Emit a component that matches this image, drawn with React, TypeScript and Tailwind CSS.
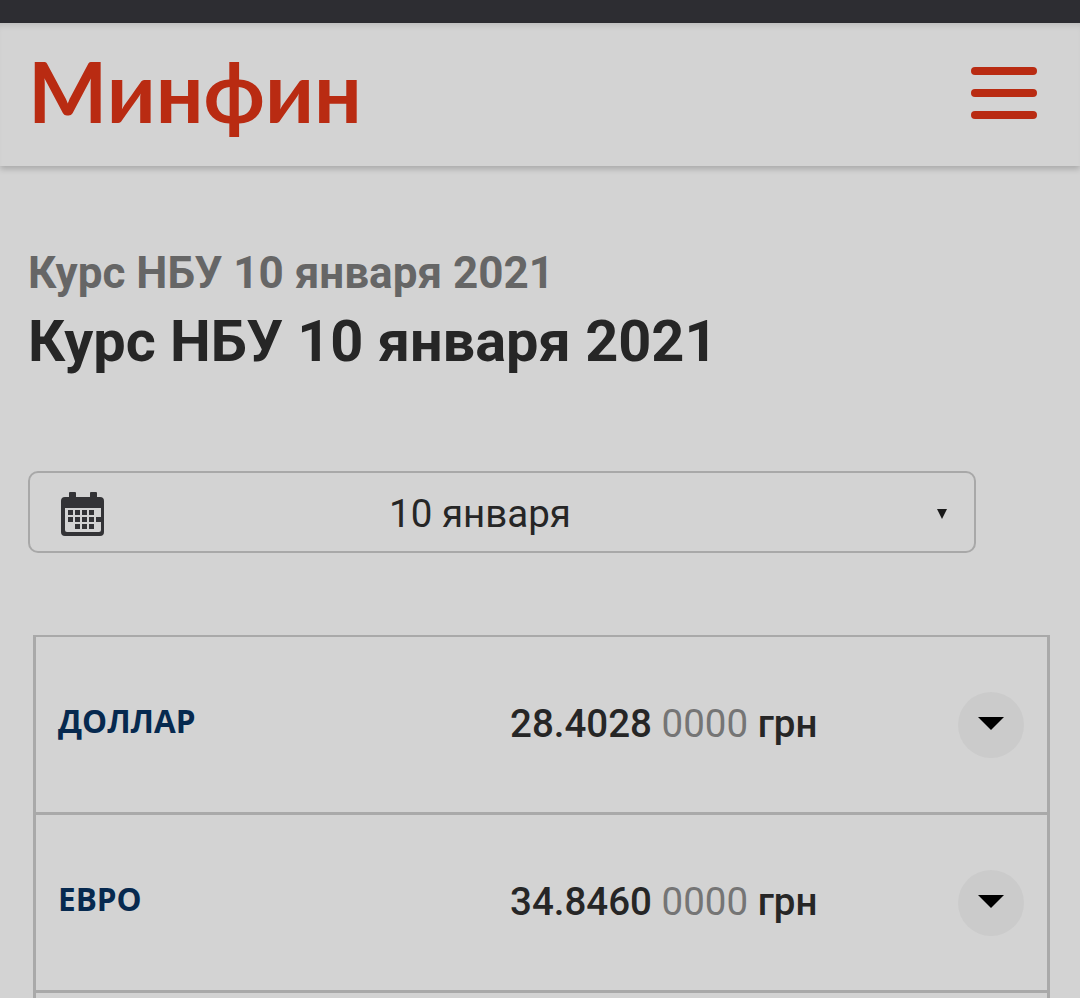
const rates = [
  { name: 'ДОЛЛАР', main: '28.4028', rest: '0000' },
  { name: 'ЕВРО', main: '34.8460', rest: '0000' },
]

function CalendarIcon() {
  return (
    <svg className="mt-[3px] h-[46px] w-[46px]" viewBox="0 0 46 46" aria-hidden="true">
      <path
        fill="#333336"
        fillRule="evenodd"
        d="M10 1h5a1 1 0 0 1 1 1v4h14V2a1 1 0 0 1 1-1h5a1 1 0 0 1 1 1v4h3a4 4 0 0 1 4 4v31a4 4 0 0 1-4 4H5a4 4 0 0 1-4-4V10a4 4 0 0 1 4-4h4V2a1 1 0 0 1 1-1zM5 17v22a2 2 0 0 0 2 2h32a2 2 0 0 0 2-2V17z"
      />
      <g fill="#333336">
        <rect x="8" y="19" width="5" height="5" />
        <rect x="15" y="19" width="5" height="5" />
        <rect x="22" y="19" width="5" height="5" />
        <rect x="29" y="19" width="5" height="5" />
        <rect x="8" y="26" width="5" height="5" />
        <rect x="15" y="26" width="5" height="5" />
        <rect x="22" y="26" width="5" height="5" />
        <rect x="29" y="26" width="5" height="5" />
        <rect x="36" y="26" width="5" height="5" />
        <rect x="15" y="33" width="5" height="5" />
        <rect x="22" y="33" width="5" height="5" />
        <rect x="29" y="33" width="5" height="5" />
      </g>
    </svg>
  )
}

function RateRow({ name, main, rest }: { name: string; main: string; rest: string }) {
  return (
    <div className="flex h-[178px] items-center border-b-[3px] border-[#a9a9a9] pl-[21px] pr-[23px]">
      <div className="ml-[1px] w-[452px] pb-[7px] font-['Open_Sans',sans-serif] text-[31.5px] font-bold text-[#06294f]">{name}</div>
      <div className="flex-1 pb-[2px] font-['Roboto',sans-serif] text-[38.5px] font-medium text-[#262626]">
        {main} <span className="font-normal text-[#757575]">{rest}</span> грн
      </div>
      <button type="button" className="flex h-[66px] w-[66px] items-center justify-center rounded-full bg-[#cbcbcb]" aria-label="Развернуть">
        <svg className="mb-[2px] h-[13px] w-[26px]" viewBox="0 0 26 13" aria-hidden="true">
          <path d="M0 0h26L13 13z" fill="#000" />
        </svg>
      </button>
    </div>
  )
}

export default function App() {
  return (
    <div className="h-[998px] overflow-hidden bg-[#d3d3d3] font-['Roboto',sans-serif]">
      <div className="h-[23px] bg-[#2d2d32]" />

      <header className="flex h-[143px] items-center justify-between pl-[28px] pr-[43px] shadow-[0_3px_6px_rgba(0,0,0,0.2),inset_0_6px_6px_-4px_rgba(0,0,0,0.12)]">
        <span className="pb-[8px] font-['Lato',sans-serif] text-[84px] font-bold leading-none text-[#b92b12]">Минфин</span>
        <button type="button" className="mb-[4px] flex w-[66px] flex-col gap-[14px]" aria-label="Меню">
          <span className="h-[8px] rounded-full bg-[#b92b12]" />
          <span className="h-[8px] rounded-full bg-[#b92b12]" />
          <span className="h-[8px] rounded-full bg-[#b92b12]" />
        </button>
      </header>

      <main className="pl-[28px] pt-[81px]">
        <div className="text-[44px] font-bold leading-[52px] text-[#666666]">Курс НБУ 10 января 2021</div>
        <h1 className="mt-[9px] text-[57.7px] font-bold leading-[66px] text-[#262626]">Курс НБУ 10 января 2021</h1>

        <div className="mt-[97px] flex h-[82px] w-[948px] items-center rounded-[10px] border-2 border-[#a8a8a8] pl-[30px] pr-[27px]">
          <CalendarIcon />
          <div className="flex-1 pr-[83px] pt-[3px] text-center text-[38.5px] leading-[50px] text-[#262626]">10 января</div>
          <span className="mt-[4px] h-0 w-0 border-x-[5px] border-t-[10px] border-x-transparent border-t-[#1a1a1a]" />
        </div>

        <div className="ml-[5px] mt-[82px] h-[400px] w-[1017px] border-x-[3px] border-t-[2px] border-[#a9a9a9]">
          {rates.map((rate) => (
            <RateRow key={rate.name} {...rate} />
          ))}
        </div>
      </main>
    </div>
  )
}
